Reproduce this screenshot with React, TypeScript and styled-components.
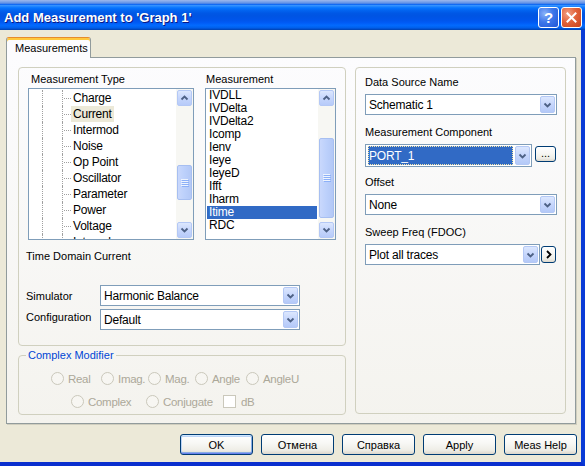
import React from "react";
import styled, { createGlobalStyle } from "styled-components";

const GlobalStyle = createGlobalStyle`
  html, body { margin: 0; padding: 0; background: #ECE9D8; }
  body {
    font-family: "Liberation Sans", Arial, sans-serif;
    font-size: 11px;
    color: #000;
  }
  * { box-sizing: border-box; }
`;

const treeItems = ["Charge", "Current", "Intermod", "Noise", "Op Point", "Oscillator", "Parameter", "Power", "Voltage", "Intervals"];
const measItems = ["IVDLL", "IVDelta", "IVDelta2", "Icomp", "Ienv", "Ieye", "IeyeD", "Ifft", "Iharm", "Itime", "RDC"];

const Window = styled.div`
  width: 585px;
  height: 466px;
  display: flex;
  flex-direction: column;
  overflow: hidden;
`;

const TopStrip = styled.div`
  height: 4px;
  background: linear-gradient(180deg, #9DB8EC 0%, #6F9BE9 60%, #3E7BE6 100%);
`;

const TitleBar = styled.div`
  height: 26px;
  display: flex;
  align-items: center;
  padding: 0 3px 0 4px;
  background: linear-gradient(180deg, #0058EE 0%, #3593FF 6%, #127DFF 12%, #036FFC 18%, #0262EE 26%, #0057E5 36%, #0054E3 46%, #0055EB 62%, #005BF5 72%, #026AFE 82%, #0062EF 90%, #0052D6 95%, #0040AB 100%);
`;

const TitleText = styled.div`
  flex: 1;
  color: #fff;
  font-weight: bold;
  font-size: 13px;
  text-shadow: 1px 1px 0 #0A1883;
`;

const CaptionButton = styled.div<{ $close?: boolean }>`
  width: 21px;
  height: 21px;
  margin-left: 2px;
  border: 1px solid #fff;
  border-radius: 3px;
  display: flex;
  align-items: center;
  justify-content: center;
  color: #fff;
  font-weight: bold;
  font-size: 15px;
  background: ${(p) =>
    p.$close
      ? "radial-gradient(circle at 30% 30%, #F0A187 0%, #E2633B 45%, #C8421C 100%)"
      : "radial-gradient(circle at 30% 30%, #8AB2F8 0%, #3D77EA 45%, #1E55D6 100%)"};
`;

const Body = styled.div`
  flex: 1;
  background: #ECE9D8;
  border-right: 4px solid #0A3BD6;
  border-bottom: 4px solid #0A2FCE;
  padding: 7px 0 0 6px;
  display: flex;
  flex-direction: column;
`;

const TabStrip = styled.div`
  height: 20px;
  display: flex;
`;

const Tab = styled.div`
  position: relative;
  z-index: 1;
  width: 85px;
  height: 21px;
  background: #FCFCFE;
  border: 1px solid #919B9C;
  border-top: 1px solid #E68B2C;
  border-bottom: none;
  border-radius: 3px 3px 0 0;
  box-shadow: inset 0 2px 0 #FFC83C;
  padding: 4px 0 0 8px;
  line-height: 13px;
`;

const Panel = styled.div`
  width: 570px;
  height: 367px;
  border: 1px solid #919B9C;
  box-shadow: 1px 1px 0 #D0CEBF;
  background: linear-gradient(180deg, #FCFCFE 0%, #F4F3EE 100%);
  padding: 9px 9px 0 11px;
  display: grid;
  grid-template-columns: 328px 211px;
  column-gap: 9px;
  align-items: start;
`;

const Column = styled.div`
  display: flex;
  flex-direction: column;
`;

const GroupBox = styled.div<{ $height: number }>`
  height: ${(p) => p.$height}px;
  border: 1px solid #D0D0BF;
  border-radius: 4px;
`;

const MeasureGroup = styled(GroupBox)`
  padding: 5px 0 0 7px;
`;

const SourceGroup = styled(GroupBox)`
  padding: 8px 0 0 9px;
  display: flex;
  flex-direction: column;
`;

const ListsRow = styled.div`
  padding-left: 2px;
  display: grid;
  grid-template-columns: 166px 131px;
  column-gap: 11px;
`;

const ColumnLabel = styled.div<{ $indent: number }>`
  height: 15px;
  line-height: 13px;
  padding-left: ${(p) => p.$indent}px;
`;

const ListFrame = styled.div`
  height: 152px;
  border: 1px solid #7F9DB9;
  background: #fff;
  display: flex;
  overflow: hidden;
`;

const TreeRows = styled.div`
  flex: 1;
  padding-top: 1px;
  overflow: hidden;
  font-size: 12px;
  letter-spacing: -0.2px;
`;

const TreeRow = styled.div`
  height: 16px;
  display: flex;
  align-items: stretch;
  padding-left: 13px;
`;

const Guide = styled.span<{ $width: number }>`
  width: ${(p) => p.$width}px;
  border-left: 1px dotted #A0A0A0;
  position: relative;
`;

const Branch = styled(Guide)`
  &::after {
    content: "";
    position: absolute;
    left: 1px;
    right: 0;
    top: 8px;
    border-top: 1px dotted #A0A0A0;
  }
`;

const TreeLabel = styled.span<{ $selected?: boolean }>`
  padding: 0 2px;
  line-height: 16px;
  background: ${(p) => (p.$selected ? "#ECE9D8" : "transparent")};
`;

const ListRows = styled.div`
  flex: 1;
  overflow: hidden;
  font-size: 12px;
  letter-spacing: -0.2px;
`;

const ListItem = styled.div<{ $selected?: boolean }>`
  height: 13px;
  line-height: 13px;
  margin: 0 1px;
  padding-left: 2px;
  background: ${(p) => (p.$selected ? "#316AC5" : "transparent")};
  color: ${(p) => (p.$selected ? "#fff" : "#000")};
`;

const ScrollBar = styled.div`
  width: 17px;
  padding: 1px;
  background: #F7F7F3;
  display: flex;
  flex-direction: column;
`;

const ScrollArrow = styled.div`
  height: 16px;
  border: 1px solid #B4C8F5;
  border-radius: 2px;
  background: linear-gradient(180deg, #DCE7FE 0%, #C6D6FC 50%, #B7CBF9 100%);
  display: flex;
  align-items: center;
  justify-content: center;
`;

const ScrollTrack = styled.div`
  flex: 1;
`;

const Thumb = styled.div`
  border: 1px solid #A7BFF1;
  border-radius: 2px;
  background: linear-gradient(90deg, #C9D8FC 0%, #BCD0FB 50%, #B3C8F6 100%);
  display: flex;
  align-items: center;
  justify-content: center;
`;

const PlainLabel = styled.div<{ $top: number }>`
  margin-top: ${(p) => p.$top}px;
  line-height: 13px;
`;

const FormGrid = styled.div`
  margin-top: 22px;
  display: grid;
  grid-template-columns: 74px 200px;
  row-gap: 3px;
  align-items: center;
`;

const FormLabel = styled.span<{ $lift?: number }>`
  margin-top: ${(p) => -(p.$lift ?? 0)}px;
`;

const ComboBox = styled.div<{ $width: number; $height?: number }>`
  width: ${(p) => p.$width}px;
  height: ${(p) => p.$height ?? 21}px;
  border: 1px solid #7F9DB9;
  background: #fff;
  padding: 1px;
  display: flex;
  align-items: stretch;
`;

const ComboText = styled.div<{ $selected?: boolean }>`
  flex: 1;
  display: flex;
  align-items: center;
  padding-left: ${(p) => (p.$selected ? 1 : 2)}px;
  margin: ${(p) => (p.$selected ? "0 2px 0 1px" : "0")};
  font-size: 12px;
  letter-spacing: -0.2px;
  background: ${(p) => (p.$selected ? "#316AC5" : "transparent")};
  color: ${(p) => (p.$selected ? "#fff" : "#000")};
  outline: ${(p) => (p.$selected ? "1px dotted #F5E7A8" : "none")};
  outline-offset: -1px;
`;

const DropButton = styled.div`
  width: 15px;
  border: 1px solid #B4C8F5;
  border-radius: 2px;
  background: linear-gradient(180deg, #DCE7FE 0%, #C6D6FC 50%, #B4C9F8 100%);
  display: flex;
  align-items: center;
  justify-content: center;
`;

const ComplexSet = styled.fieldset`
  margin: 3px 0 0 0;
  padding: 0;
  min-width: 0;
  height: 66px;
  border: 1px solid #D0D0BF;
  border-radius: 4px;
`;

const Legend = styled.legend`
  margin-left: 7px;
  padding: 0 2px;
  line-height: 13px;
  color: #0046D5;
`;

const RadioRow = styled.div<{ $indent: number }>`
  height: 13px;
  margin-top: 10px;
  padding-left: ${(p) => p.$indent}px;
  display: flex;
  align-items: center;
`;

const RadioItem = styled.div<{ $width?: number }>`
  width: ${(p) => (p.$width ? `${p.$width}px` : "auto")};
  display: flex;
  align-items: center;
  gap: 4px;
  color: #ACA899;
  font-size: 11.5px;
  letter-spacing: -0.3px;
  white-space: nowrap;
`;

const RadioCircle = styled.span`
  width: 13px;
  height: 13px;
  border: 1px solid #CAC8BB;
  border-radius: 50%;
  background: #F7F6F2;
  flex: none;
`;

const CheckSquare = styled.span`
  width: 13px;
  height: 13px;
  border: 1px solid #CAC8BB;
  background: #fff;
  flex: none;
  margin-right: 1px;
`;

const Field = styled.div`
  height: 50px;
  display: flex;
  flex-direction: column;
`;

const FieldLabel = styled.div`
  line-height: 13px;
  margin-bottom: 5px;
`;

const ControlRow = styled.div<{ $gap: number }>`
  display: flex;
  align-items: flex-start;
  gap: ${(p) => p.$gap}px;
`;

const XPButton = styled.div<{ $default?: boolean }>`
  border: 1px solid #003C74;
  border-radius: 3px;
  background: linear-gradient(180deg, #FFFFFF 0%, #F7F7F4 45%, #EEEDE6 80%, #DCD7CC 100%);
  display: flex;
  align-items: center;
  justify-content: center;
  box-shadow: ${(p) =>
    p.$default
      ? "inset 0 1px 0 #CEE7FF, inset 0 -1px 0 #6982EE, inset 1px 0 0 #BCD4F6, inset -1px 0 0 #89ADE4, inset 0 2px 0 #BCD4F6, inset 0 -2px 0 #89ADE4"
      : "none"};
`;

const SmallButton = styled(XPButton)<{ $w: number; $h: number }>`
  width: ${(p) => p.$w}px;
  height: ${(p) => p.$h}px;
  margin-top: 2px;
  font-size: 11px;
  line-height: 8px;
  padding-bottom: 3px;
`;

const ButtonRow = styled.div`
  margin-top: 10px;
  padding-right: 4px;
  display: flex;
  justify-content: flex-end;
  gap: 8px;
`;

const DialogButton = styled(XPButton)`
  width: 73px;
  height: 21px;
  font-size: 11px;
`;

const Chevron = ({ dir = "down" }: { dir?: "down" | "up" | "right" }) => {
  const d = dir === "down" ? "M1.5 1.5 L4.5 4.5 L7.5 1.5" : dir === "up" ? "M1.5 4.5 L4.5 1.5 L7.5 4.5" : "M2 1 L5.5 4.5 L2 8";
  const size = dir === "right" ? { w: 8, h: 9 } : { w: 9, h: 6 };
  return (
    <svg width={size.w} height={size.h} viewBox={`0 0 ${size.w} ${size.h}`}>
      <path d={d} fill="none" stroke={dir === "right" ? "#000" : "#4D6185"} strokeWidth="1.8" />
    </svg>
  );
};

const Grip = () => (
  <svg width="8" height="8" viewBox="0 0 8 8">
    {[0, 2, 4, 6].map((y) => (
      <g key={y}>
        <rect x="0" y={y} width="7" height="1" fill="#EEF4FE" />
        <rect x="1" y={y + 1} width="7" height="1" fill="#8CB0F8" />
      </g>
    ))}
  </svg>
);

function Scroller({ thumbTop, thumbHeight }: { thumbTop: number; thumbHeight: number }) {
  return (
    <ScrollBar>
      <ScrollArrow>
        <Chevron dir="up" />
      </ScrollArrow>
      <ScrollTrack>
        <Thumb style={{ marginTop: thumbTop, height: thumbHeight }}>
          <Grip />
        </Thumb>
      </ScrollTrack>
      <ScrollArrow>
        <Chevron />
      </ScrollArrow>
    </ScrollBar>
  );
}

function Combo({ width, height, value, selected }: { width: number; height?: number; value: string; selected?: boolean }) {
  return (
    <ComboBox $width={width} $height={height}>
      <ComboText $selected={selected}>{value}</ComboText>
      <DropButton>
        <Chevron />
      </DropButton>
    </ComboBox>
  );
}

export default function App() {
  return (
    <Window>
      <GlobalStyle />
      <TopStrip />
      <TitleBar>
        <TitleText>Add Measurement to 'Graph 1'</TitleText>
        <CaptionButton>?</CaptionButton>
        <CaptionButton $close>
          <svg width="11" height="11" viewBox="0 0 11 11">
            <path d="M1.5 1.5 L9.5 9.5 M9.5 1.5 L1.5 9.5" stroke="#fff" strokeWidth="2" strokeLinecap="square" />
          </svg>
        </CaptionButton>
      </TitleBar>
      <Body>
        <TabStrip>
          <Tab>Measurements</Tab>
        </TabStrip>
        <Panel>
          <Column>
            <MeasureGroup $height={279}>
              <ListsRow>
                <Column>
                  <ColumnLabel $indent={3}>Measurement Type</ColumnLabel>
                  <ListFrame>
                    <TreeRows>
                      {treeItems.map((item) => (
                        <TreeRow key={item}>
                          <Guide $width={20} />
                          <Branch $width={9} />
                          <TreeLabel $selected={item === "Current"}>{item}</TreeLabel>
                        </TreeRow>
                      ))}
                    </TreeRows>
                    <Scroller thumbTop={59} thumbHeight={35} />
                  </ListFrame>
                </Column>
                <Column>
                  <ColumnLabel $indent={1}>Measurement</ColumnLabel>
                  <ListFrame>
                    <ListRows>
                      {measItems.map((item) => (
                        <ListItem key={item} $selected={item === "Itime"}>
                          {item}
                        </ListItem>
                      ))}
                    </ListRows>
                    <Scroller thumbTop={32} thumbHeight={80} />
                  </ListFrame>
                </Column>
              </ListsRow>
              <PlainLabel $top={10}>Time Domain Current</PlainLabel>
              <FormGrid>
                <FormLabel>Simulator</FormLabel>
                <Combo width={200} value="Harmonic Balance" />
                <FormLabel $lift={5}>Configuration</FormLabel>
                <Combo width={200} value="Default" />
              </FormGrid>
            </MeasureGroup>
            <ComplexSet>
              <Legend>Complex Modifier</Legend>
              <RadioRow $indent={32}>
                <RadioItem $width={50}><RadioCircle />Real</RadioItem>
                <RadioItem $width={47}><RadioCircle />Imag.</RadioItem>
                <RadioItem $width={47}><RadioCircle />Mag.</RadioItem>
                <RadioItem $width={51}><RadioCircle />Angle</RadioItem>
                <RadioItem><RadioCircle />AngleU</RadioItem>
              </RadioRow>
              <RadioRow $indent={52}>
                <RadioItem $width={75}><RadioCircle />Complex</RadioItem>
                <RadioItem $width={77}><RadioCircle />Conjugate</RadioItem>
                <RadioItem><CheckSquare />dB</RadioItem>
              </RadioRow>
            </ComplexSet>
          </Column>
          <SourceGroup $height={347}>
            <Field>
              <FieldLabel>Data Source Name</FieldLabel>
              <Combo width={192} value="Schematic 1" />
            </Field>
            <Field>
              <FieldLabel>Measurement Component</FieldLabel>
              <ControlRow $gap={3}>
                <Combo width={167} height={23} value="PORT_1" selected />
                <SmallButton $w={21} $h={16}>...</SmallButton>
              </ControlRow>
            </Field>
            <Field>
              <FieldLabel>Offset</FieldLabel>
              <Combo width={192} value="None" />
            </Field>
            <Field>
              <FieldLabel>Sweep Freq (FDOC)</FieldLabel>
              <ControlRow $gap={1}>
                <Combo width={175} value="Plot all traces" />
                <SmallButton $w={15} $h={17} style={{ paddingBottom: 0 }}>
                  <Chevron dir="right" />
                </SmallButton>
              </ControlRow>
            </Field>
          </SourceGroup>
        </Panel>
        <ButtonRow>
          <DialogButton $default>OK</DialogButton>
          <DialogButton>Отмена</DialogButton>
          <DialogButton>Справка</DialogButton>
          <DialogButton>Apply</DialogButton>
          <DialogButton>Meas Help</DialogButton>
        </ButtonRow>
      </Body>
    </Window>
  );
}
